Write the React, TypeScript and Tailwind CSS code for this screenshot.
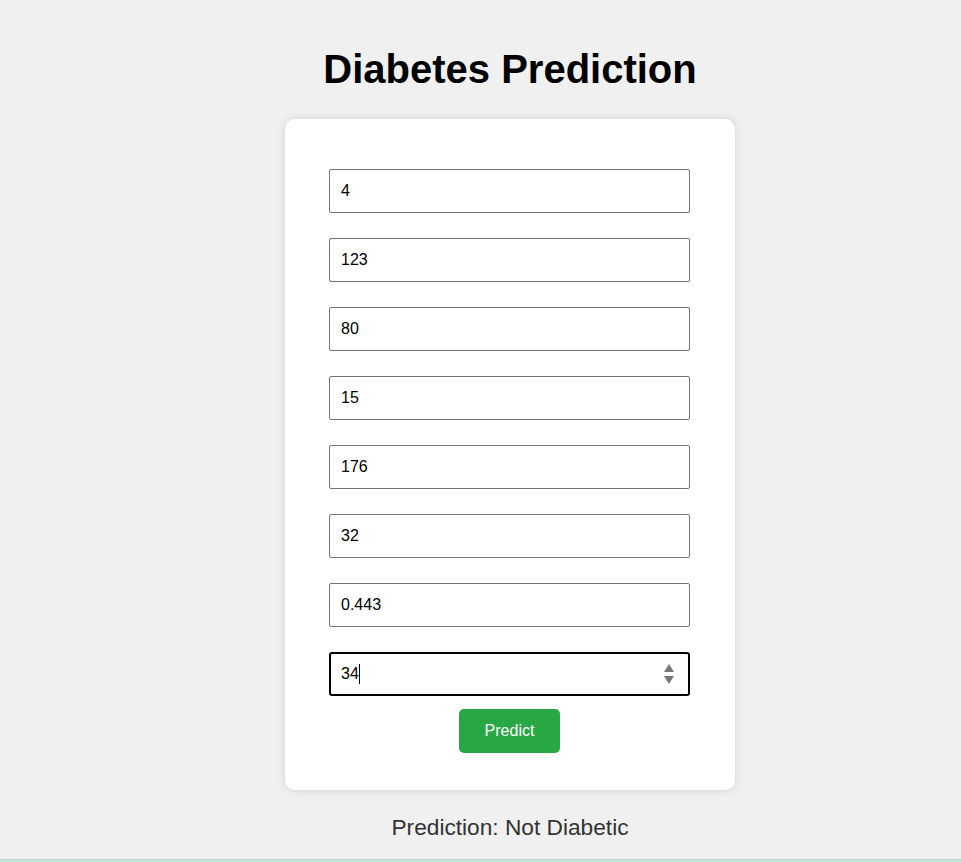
import { useState } from 'react';

const fields = ['4', '123', '80', '15', '176', '32', '0.443'];

const App = () => {
  const [values, setValues] = useState<string[]>(fields);
  const [age, setAge] = useState('34');

  return (
    <div className="h-[862px] bg-[#f0f0f0] flex flex-col font-['Liberation_Sans',Arial,sans-serif] overflow-hidden">
      <div className="flex flex-col items-center pl-[59px]">
        <h1 className="mt-[46px] text-[40px] leading-[46px] font-bold text-black">Diabetes Prediction</h1>

        {/* Form card */}
        <div className="mt-[27px] w-[450px] bg-white rounded-[10px] shadow-[0_0_10px_rgba(0,0,0,0.12)] pl-[44px] pr-[45px] pt-[50px] pb-[37px] flex flex-col">
          <div className="flex flex-col gap-[25px]">
            {values.map((v, i) => (
              <input
                key={i}
                type="text"
                value={v}
                onChange={(e) => {
                  const next = [...values];
                  next[i] = e.target.value;
                  setValues(next);
                }}
                className="h-[44px] w-full border border-[#767676] rounded-[2px] px-[11px] text-[16px] text-black outline-none bg-white"
              />
            ))}
            <div className="h-[44px] w-full border-2 border-black rounded-[3px] pl-[10px] pr-[13px] flex items-center bg-white">
              <input
                type="text"
                value={age}
                onChange={(e) => setAge(e.target.value)}
                className="w-[18px] text-[16px] text-black outline-none bg-transparent"
              />
              <span className="w-px h-[20px] bg-black" />
              <div className="flex-1" />
              <svg width="12" height="22" viewBox="0 0 12 22">
                <path d="M6 1 L11 9 L1 9 Z" fill="#777" />
                <path d="M1 13 L11 13 L6 21 Z" fill="#777" />
              </svg>
            </div>
          </div>
          <button
            type="button"
            className="mt-[13px] self-center w-[101px] h-[44px] rounded-[5px] bg-[#28a745] text-white text-[16px]"
          >
            Predict
          </button>
        </div>

        <p className="mt-[24px] text-[22.7px] leading-[26px] text-[#333]">Prediction: Not Diabetic</p>
      </div>
      <div className="mt-auto h-px bg-[#c8d4cc]" />
      <div className="h-[2px] bg-[#c0e6d6]" />
    </div>
  );
};

export default App;
